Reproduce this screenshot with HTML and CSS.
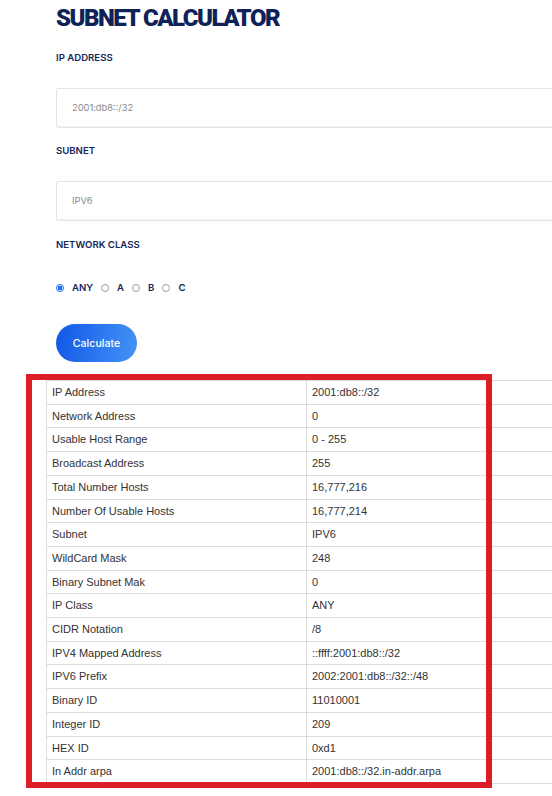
FILE: index.html
```html
<!DOCTYPE html>
<html lang="en">
<head>
<meta charset="utf-8">
<title>Subnet Calculator</title>
<link rel="stylesheet" href="styles.css">
</head>
<body>
<div class="page">
  <div class="form">
    <h1 class="title">SUBNET CALCULATOR</h1>
    <label class="label label-ip">IP ADDRESS</label>
    <div class="input">2001:db8::/32</div>
    <label class="label label-subnet">SUBNET</label>
    <div class="input">IPV6</div>
    <label class="label label-class">NETWORK CLASS</label>
    <div class="radios">
      <span class="radio checked"></span><span class="rlabel">ANY</span>
      <span class="radio"></span><span class="rlabel">A</span>
      <span class="radio"></span><span class="rlabel">B</span>
      <span class="radio"></span><span class="rlabel">C</span>
    </div>
    <button class="btn">Calculate</button>
  </div>
  <div class="results">
    <table class="table">
      <tr><td>IP Address</td><td>2001:db8::/32</td></tr>
      <tr><td>Network Address</td><td>0</td></tr>
      <tr><td>Usable Host Range</td><td>0 - 255</td></tr>
      <tr><td>Broadcast Address</td><td>255</td></tr>
      <tr><td>Total Number Hosts</td><td>16,777,216</td></tr>
      <tr><td>Number Of Usable Hosts</td><td>16,777,214</td></tr>
      <tr><td>Subnet</td><td>IPV6</td></tr>
      <tr><td>WildCard Mask</td><td>248</td></tr>
      <tr><td>Binary Subnet Mak</td><td>0</td></tr>
      <tr><td>IP Class</td><td>ANY</td></tr>
      <tr><td>CIDR Notation</td><td>/8</td></tr>
      <tr><td>IPV4 Mapped Address</td><td>::ffff:2001:db8::/32</td></tr>
      <tr><td>IPV6 Prefix</td><td>2002:2001:db8::/32::/48</td></tr>
      <tr><td>Binary ID</td><td>11010001</td></tr>
      <tr><td>Integer ID</td><td>209</td></tr>
      <tr><td>HEX ID</td><td>0xd1</td></tr>
      <tr><td>In Addr arpa</td><td>2001:db8::/32.in-addr.arpa</td></tr>
    </table>
    <div class="highlight"></div>
  </div>
</div>
</body>
</html>
```

FILE: styles.css
```css
html, body {
  margin: 0;
  padding: 0;
  background: #ffffff;
  overflow: hidden;
}
.page {
  width: 552px;
  height: 796px;
  overflow: hidden;
  position: relative;
  font-family: Inter, "Noto Sans", sans-serif;
}
.form {
  padding-left: 56px;
  display: flex;
  flex-direction: column;
  align-items: flex-start;
}
.title {
  margin: 4px 0 0;
  font-family: Roboto, "Liberation Sans", sans-serif;
  font-weight: 900;
  font-size: 24px;
  line-height: 28px;
  letter-spacing: -1.5px;
  color: #0f2257;
  white-space: nowrap;
}
.label {
  display: block;
  font-size: 9.6px;
  line-height: 14px;
  font-weight: 600;
  color: #16265a;
  letter-spacing: 0;
}
.label-ip { margin-top: 19px; }
.label-subnet { margin-top: 16px; }
.label-class { margin-top: 17px; }
.input {
  box-sizing: border-box;
  width: 540px;
  height: 40px;
  margin-top: 23px;
  border: 1px solid #e4e4e4;
  border-radius: 2px;
  padding-left: 15px;
  font-size: 9.3px;
  line-height: 38px;
  color: #8a8a8a;
  background: #fff;
  box-shadow: inset 0 -1px 0 #f2f2f2;
}
.radios {
  margin-top: 29px;
  display: flex;
  align-items: center;
  height: 14px;
}
.radio {
  box-sizing: border-box;
  width: 8px;
  height: 8px;
  border-radius: 50%;
  border: 1px solid #9a9a9a;
  background: #fff;
  margin-left: 8px;
  margin-right: 6px;
}
.radio:first-child {
  margin-left: 0;
}
.radio.checked {
  border: 1px solid #1a73e8;
  background: radial-gradient(circle, #1a73e8 0 2.2px, #fff 2.6px);
}
.rlabel {
  font-size: 9.6px;
  font-weight: 600;
  color: #16265a;
  line-height: 14px;
  padding-left: 2px;
}
.btn {
  margin-top: 29px;
  width: 81px;
  height: 38px;
  border: none;
  border-radius: 19px;
  background: linear-gradient(100deg, #1257e6 0%, #2f7cf1 60%, #4592f5 100%);
  color: #ffffff;
  font-family: Inter, "Noto Sans", sans-serif;
  font-size: 10.6px;
  font-weight: 500;
  padding: 0;
  cursor: pointer;
}
.results {
  margin-top: 18px;
  padding-left: 46px;
}
.table {
  border-collapse: collapse;
  width: 520px;
  table-layout: fixed;
  font-family: "Liberation Sans", Arial, sans-serif;
  font-size: 11px;
  color: #333333;
}
.table td {
  border: 1px solid #dcdcdc;
  padding: 5px 5px 4px;
  height: 13.7px;
  line-height: 13.7px;
  white-space: nowrap;
}
.table td:first-child {
  width: 249px;
}
.highlight {
  position: absolute;
  left: 26px;
  top: 374px;
  width: 466px;
  height: 414px;
  box-sizing: border-box;
  border: 6px solid #dc1e26;
  pointer-events: none;
}
```
